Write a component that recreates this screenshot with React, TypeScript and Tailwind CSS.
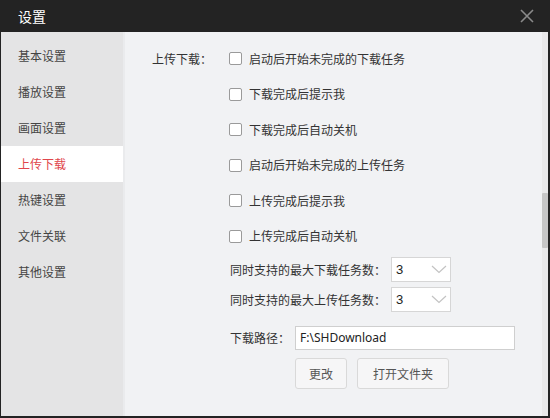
import React from "react";

const font = { fontFamily: '"Noto Sans CJK SC", "Noto Sans", sans-serif' };

function Checkbox({ label }: { label: string }) {
  return (
    <div className="flex h-[35.5px] items-center">
      <span className="h-[13px] w-[13px] shrink-0 rounded-[2px] border border-[#9a9a9a] bg-white" />
      <span className="ml-[7px] text-[12px] leading-none text-[#333]">{label}</span>
    </div>
  );
}

function Select({ value }: { value: string }) {
  return (
    <div className="flex h-[25px] w-[60px] items-center justify-between border border-[#d6d6d6] bg-white pl-[4px] pr-[3px]">
      <span className="text-[13px] leading-none text-[#222]" style={{ fontFamily: '"Liberation Sans", sans-serif' }}>
        {value}
      </span>
      <svg width="16" height="9" viewBox="0 0 16 9" fill="none">
        <path d="M1 1 L8 7.5 L15 1" stroke="#c3c3c3" strokeWidth="1.2" />
      </svg>
    </div>
  );
}

export default function App() {
  const nav = ["基本设置", "播放设置", "画面设置", "上传下载", "热键设置", "文件关联", "其他设置"];
  const checks = [
    "启动后开始未完成的下载任务",
    "下载完成后提示我",
    "下载完成后自动关机",
    "启动后开始未完成的上传任务",
    "上传完成后提示我",
    "上传完成后自动关机",
  ];
  return (
    <div className="flex h-[418px] w-[550px] flex-col bg-[#232323] pb-[2px] pl-[1px] pr-[2px]" style={font}>
      <div className="flex h-[32px] shrink-0 items-center justify-between pl-[17px] pr-[14px]">
        <span className="text-[14px] leading-none text-white">设置</span>
        <svg width="14" height="14" viewBox="0 0 14 14">
          <path d="M1 1 L13 13 M13 1 L1 13" stroke="#8a8a8a" strokeWidth="1.6" />
        </svg>
      </div>
      <div className="flex min-h-0 flex-1">
        <div className="flex w-[122px] flex-col bg-[#e4e4e5] pt-[6px]">
          {nav.map((n) => (
            <div
              key={n}
              className={
                n === "上传下载"
                  ? "flex h-[36px] items-center bg-white pl-[17px] text-[12px] text-[#e0464c]"
                  : "flex h-[36px] items-center pl-[17px] text-[12px] text-[#444]"
              }
            >
              {n}
            </div>
          ))}
        </div>
        <div className="w-[2px] bg-[#eaebed]" />
        <div className="flex flex-1 flex-col bg-[#f1f2f4] pt-[9px]">
          <div className="flex">
            <div className="flex h-[35.5px] w-[104px] shrink-0 items-center whitespace-nowrap pl-[27px] text-[12px] text-[#333]">
              上传下载：
            </div>
            <div className="flex flex-col">
              {checks.map((c) => (
                <Checkbox key={c} label={c} />
              ))}
            </div>
          </div>
          <div className="mt-[3px] flex flex-col gap-[5px] pl-[105px]">
            <div className="flex items-center">
              <span className="w-[161px] whitespace-nowrap text-[12px] leading-none text-[#333]">同时支持的最大下载任务数：</span>
              <Select value="3" />
            </div>
            <div className="flex items-center">
              <span className="w-[161px] whitespace-nowrap text-[12px] leading-none text-[#333]">同时支持的最大上传任务数：</span>
              <Select value="3" />
            </div>
          </div>
          <div className="mt-[14px] flex items-center pl-[105px]">
            <span className="w-[65px] whitespace-nowrap text-[12px] leading-none text-[#333]">下载路径：</span>
            <div
              className="flex h-[24px] w-[220px] items-center border border-[#cfcfcf] bg-white pl-[4px] text-[12px] text-[#222]"
              style={{ fontFamily: '"Noto Sans", sans-serif' }}
            >
              F:\SHDownload
            </div>
          </div>
          <div className="mt-[8px] flex gap-[10px] pl-[170px]">
            <button className="flex h-[31px] w-[52px] items-center justify-center rounded-[3px] border border-[#d9d9d9] bg-[#f6f6f7] text-[12px] text-[#555]">
              更改
            </button>
            <button className="flex h-[31px] w-[92px] items-center justify-center rounded-[3px] border border-[#d9d9d9] bg-[#f6f6f7] text-[12px] text-[#555]">
              打开文件夹
            </button>
          </div>
        </div>
        <div className="flex w-[6px] flex-col bg-[#e9e9ea]">
          <div className="mt-[161px] h-[55px] w-full rounded-[1px] bg-[#c6c6c6]" />
        </div>
      </div>
    </div>
  );
}
